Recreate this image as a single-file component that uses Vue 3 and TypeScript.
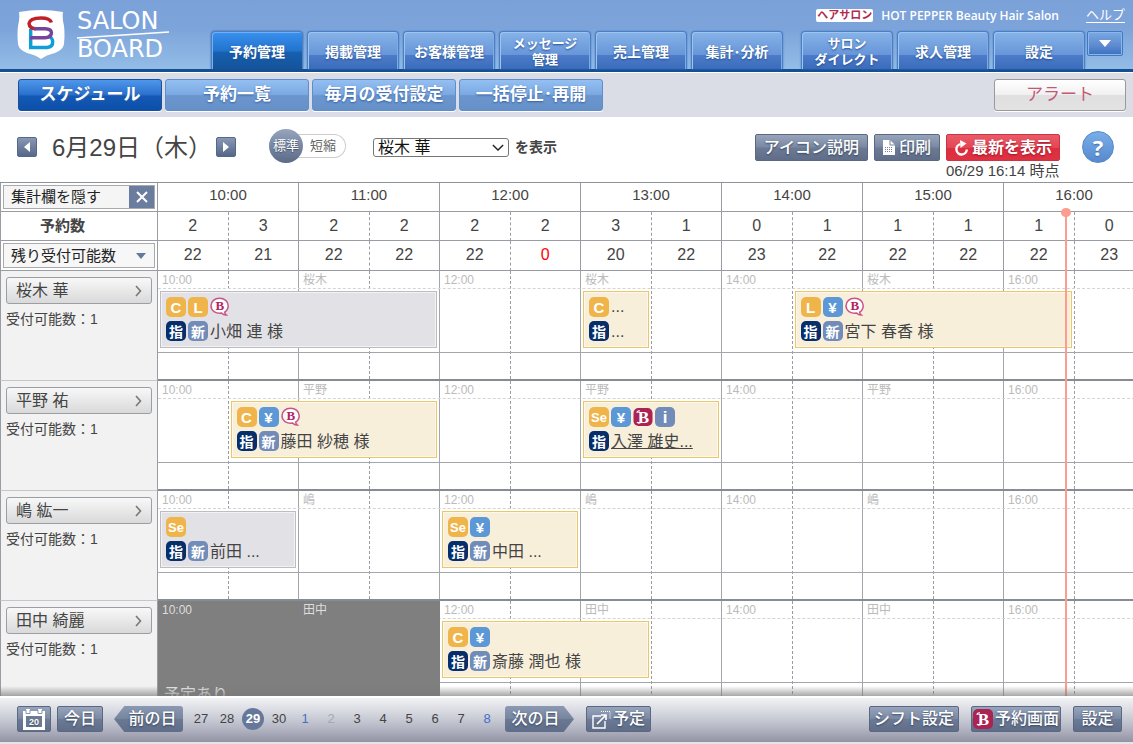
<script setup lang="ts">
import { computed, ref } from 'vue'

type IconKind = 'C' | 'L' | 'Se' | 'yen' | 'bubble' | 'beauty' | 'info' | 'shimei' | 'shin'

interface Booking {
  start: number
  span: number
  top: IconKind[]
  bottom: IconKind[]
  name: string
  note?: string
  done?: boolean
  linked?: boolean
}

interface Staff {
  name: string
  short: string
  capacity: number
  bookings: Booking[]
  blocked?: { start: number; span: number; text: string }
}

const mainTabs = ['予約管理', '掲載管理', 'お客様管理', 'メッセージ\n管理', '売上管理', '集計･分析']
const sideTabs = ['サロン\nダイレクト', '求人管理', '設定']
const subTabs = ['スケジュール', '予約一覧', '毎月の受付設定', '一括停止･再開']

const hours = ['10:00', '11:00', '12:00', '13:00', '14:00', '15:00', '16:00']
const reserved = [2, 3, 2, 2, 2, 2, 3, 1, 0, 1, 1, 1, 1, 0]
const remaining = [22, 21, 22, 22, 22, 0, 20, 22, 23, 22, 22, 22, 22, 23]

const staff: Staff[] = [
  {
    name: '桜木 華',
    short: '桜木',
    capacity: 1,
    bookings: [
      { start: 1, span: 4, top: ['C', 'L', 'bubble'], bottom: ['shimei', 'shin'], name: '小畑 連 様', done: true },
      { start: 7, span: 1, top: ['C'], bottom: ['shimei'], name: '...', note: '...' },
      { start: 10, span: 4, top: ['L', 'yen', 'bubble'], bottom: ['shimei', 'shin'], name: '宮下 春香 様' },
    ],
  },
  {
    name: '平野 祐',
    short: '平野',
    capacity: 1,
    bookings: [
      { start: 2, span: 3, top: ['C', 'yen', 'bubble'], bottom: ['shimei', 'shin'], name: '藤田 紗穂 様' },
      { start: 7, span: 2, top: ['Se', 'yen', 'beauty', 'info'], bottom: ['shimei'], name: '入澤 雄史...', linked: true },
    ],
  },
  {
    name: '嶋 紘一',
    short: '嶋',
    capacity: 1,
    bookings: [
      { start: 1, span: 2, top: ['Se'], bottom: ['shimei', 'shin'], name: '前田 ...', done: true },
      { start: 5, span: 2, top: ['Se', 'yen'], bottom: ['shimei', 'shin'], name: '中田 ...' },
    ],
  },
  {
    name: '田中 綺麗',
    short: '田中',
    capacity: 1,
    bookings: [{ start: 5, span: 3, top: ['C', 'yen'], bottom: ['shimei', 'shin'], name: '斎藤 潤也 様' }],
    blocked: { start: 1, span: 4, text: '予定あり' },
  },
]

const iconText: Record<IconKind, string> = {
  C: 'C',
  L: 'L',
  Se: 'Se',
  yen: '¥',
  bubble: 'B',
  beauty: 'B',
  info: 'i',
  shimei: '指',
  shin: '新',
}

const days = [27, 28, 29, 30, 1, 2, 3, 4, 5, 6, 7, 8]
const dayClass = (d: number) => ({ today: d === 29, weekend: d === 1 || d === 8, closed: d === 2 })

const selectedStaff = ref('桜木 華')
const nowOffset = ref(6.44)
const nowStyle = computed(() => ({ left: `${(nowOffset.value / hours.length) * 100}%` }))
const laneLabel = (s: Staff, i: number) => (i % 2 === 0 ? hours[i] : s.short)
const place = (b: { start: number; span: number }) => ({ gridColumn: `${b.start} / span ${b.span}` })
</script>

<template>
  <div class="app">
    <header class="header">
      <a class="logo" href="#" aria-label="SALON BOARD">
        <svg class="shield" viewBox="0 0 48 52" aria-hidden="true">
          <path d="M2 3 Q24 -1 46 3 Q45 9 47 17 Q48 25 47 35 Q46 41 38 44 Q29 46 24 50 Q19 46 10 44 Q2 41 1 35 Q0 25 1 17 Q3 9 2 3Z" fill="#fff" />
          <g fill="none" stroke-width="3.4">
            <path d="M13.7 20 V38.5 H30 Q36 38 35.7 32.500 Q35.500 28.500 31 27" stroke="#0f9fd8" />
            <path d="M34.500 13.500 Q33 9 24 9 Q13 9 12 14.500 Q12.500 19.500 19 19.800" stroke="#c1202b" />
            <path d="M17 19.800 H28 Q34.500 20 34.500 24 Q34 28.500 28 28.700 H13" stroke="#74459a" />
          </g>
        </svg>
        <span class="wordmark">
          <span>SALON</span>
          <svg viewBox="0 0 92 8" preserveAspectRatio="none" aria-hidden="true"><path d="M0 7 L92 1" stroke="#fff" stroke-width="1.6" /></svg>
          <span>BOARD</span>
        </span>
      </a>
      <div class="header-main">
        <div class="account">
          <span class="genre">ヘアサロン</span>
          <span class="salon">HOT PEPPER Beauty Hair Salon</span>
          <a class="help-link" href="#">ヘルプ</a>
        </div>
        <nav class="tabs" aria-label="メイン">
          <a v-for="(t, i) in mainTabs" :key="t" href="#" class="tab" :class="{ active: i === 0, two: t.includes('\n') }">{{ t }}</a>
          <span class="tab-space"></span>
          <a v-for="t in sideTabs" :key="t" href="#" class="tab" :class="{ two: t.includes('\n') }">{{ t }}</a>
          <button class="more" type="button" aria-label="メニューを開く"><i class="tri down"></i></button>
        </nav>
      </div>
    </header>

    <nav class="subnav" aria-label="予約管理">
      <a v-for="(t, i) in subTabs" :key="t" href="#" class="sub" :class="{ active: i === 0 }">{{ t }}</a>
      <a href="#" class="sub alert">アラート</a>
    </nav>

    <section class="toolbar">
      <button class="step" type="button" aria-label="前の日"><i class="tri left"></i></button>
      <h1 class="date">6月29日（木）</h1>
      <button class="step" type="button" aria-label="次の日"><i class="tri right"></i></button>
      <div class="density">
        <button class="wide" type="button" aria-pressed="true">標準</button>
        <button class="narrow" type="button" aria-pressed="false">短縮</button>
      </div>
      <label class="picker">
        <span class="select-wrap">
          <select v-model="selectedStaff">
            <option v-for="s in staff" :key="s.name">{{ s.name }}</option>
          </select>
          <svg viewBox="0 0 14 8" aria-hidden="true"><path d="M1 1 L7 7 L13 1" fill="none" stroke="#222" stroke-width="1.6" /></svg>
        </span>
        を表示
      </label>
      <div class="actions">
        <button class="metal" type="button">アイコン説明</button>
        <button class="metal" type="button">
          <svg class="doc" viewBox="0 0 12 15" aria-hidden="true">
            <path d="M0 0 H7 L12 5 V15 H0Z" fill="#fff" />
            <path d="M7 0 V5 H12" fill="none" stroke="#7484a0" />
            <path d="M2 7.5 H10 M2 9.5 H10 M2 11.5 H10" stroke="#7484a0" stroke-dasharray="1 1" />
          </svg>印刷
        </button>
        <div class="refresh">
          <button class="metal red" type="button">
            <svg class="reload" viewBox="0 0 15 16" aria-hidden="true">
              <path d="M6.500 4.200 A5.2 5.2 0 1 0 12.8 9.500" fill="none" stroke="#fff" stroke-width="2.4" />
              <path d="M6 0 L12.500 3.500 L6.500 8Z" fill="#fff" />
            </svg>最新を表示
          </button>
          <span class="stamp">06/29 16:14 時点</span>
        </div>
        <button class="question" type="button" aria-label="ヘルプ">?</button>
      </div>
    </section>

    <main class="board">
      <table class="schedule">
        <thead>
          <tr class="hours">
            <th scope="row" class="side">
              <button class="toggle" type="button"><span>集計欄を隠す</span><i>
                <svg viewBox="0 0 12 12" aria-hidden="true"><path d="M1 1 L11 11 M11 1 L1 11" stroke="#fff" stroke-width="2" /></svg>
              </i></button>
            </th>
            <th v-for="h in hours" :key="h" scope="col" class="hour">{{ h }}</th>
          </tr>
        </thead>
        <tbody>
          <tr class="counts">
            <th scope="row" class="side total">予約数</th>
            <td v-for="(n, i) in reserved" :key="i">{{ n }}</td>
          </tr>
          <tr class="counts remain">
            <th scope="row" class="side">
              <span class="kind">
                <select aria-label="集計の種類"><option>残り受付可能数</option></select>
                <i class="tri down blue"></i>
              </span>
            </th>
            <td v-for="(n, i) in remaining" :key="i" :class="{ none: n === 0 }">{{ n }}</td>
          </tr>
          <tr v-for="s in staff" :key="s.name" class="staff">
            <th scope="row" class="side person">
              <button type="button">
                {{ s.name }}
                <svg viewBox="0 0 7 12" aria-hidden="true"><path d="M1 1 L5.5 6 L1 11" fill="none" stroke="#777" stroke-width="1.6" /></svg>
              </button>
              <span>受付可能数：{{ s.capacity }}</span>
            </th>
            <td class="lane">
              <span v-for="n in 14" :key="'c' + n" class="col" :class="{ half: n % 2 === 1 }" :style="place({ start: n, span: 1 })"></span>
              <span class="line label-line"></span>
              <span class="line slot-line"></span>
              <div v-if="s.blocked" class="blocked" :style="place(s.blocked)">{{ s.blocked.text }}</div>
              <span
                v-for="(h, i) in hours"
                :key="h"
                class="label"
                :class="{ onblock: s.blocked && i * 2 < s.blocked.span }"
                :style="place({ start: i * 2 + 1, span: 2 })"
              >{{ laneLabel(s, i) }}</span>
              <article v-for="b in s.bookings" :key="b.start" class="booking" :class="{ done: b.done }" :style="place(b)">
                <div class="line-items">
                  <template v-for="k in b.top" :key="k">
                    <svg v-if="k === 'bubble'" class="ic" viewBox="0 0 20 20" role="img" aria-label="B">
                      <path d="M9.5 1.2 C14.5 1.2 18.2 4.4 18.2 8.7 C18.2 11.6 16.8 13.8 14.6 15.1 Q15 17 16.4 18 Q13.4 18.2 11.6 16.1 C5.6 16.9 1 13.6 1 8.8 C1 4.4 4.7 1.2 9.5 1.2Z" fill="#fff" stroke="#c8558a" stroke-width="1.5" />
                      <text x="9.8" y="13.2" text-anchor="middle" class="bubble-b">B</text>
                    </svg>
                    <svg v-else-if="k === 'beauty'" class="ic" viewBox="0 0 20 20" role="img" aria-label="B">
                      <rect x="0.5" y="1" width="19" height="18" rx="5" fill="#ab2352" />
                      <text x="10.5" y="15.6" text-anchor="middle" class="beauty-b">B</text>
                      <path d="M4 6 Q4 3.5 7 4 M4 15 Q5 17 8 15.5" fill="none" stroke="#fff" stroke-width="1.2" />
                    </svg>
                    <span v-else class="ic" :class="k">{{ iconText[k] }}</span>
                  </template>
                  <span v-if="b.note" class="note">{{ b.note }}</span>
                </div>
                <div class="line-items">
                  <span v-for="k in b.bottom" :key="k" class="ic" :class="k">{{ iconText[k] }}</span>
                  <a v-if="b.linked" class="name" href="#">{{ b.name }}</a>
                  <span v-else class="name">{{ b.name }}</span>
                </div>
              </article>
            </td>
          </tr>
        </tbody>
      </table>
      <div class="now-layer"><i class="now" :style="nowStyle"></i></div>
      <div class="fade"></div>
    </main>

    <footer class="footer">
      <button class="metal foot calendar" type="button" aria-label="カレンダー">
        <svg viewBox="0 0 22 21" aria-hidden="true">
          <path d="M0 2 H3 V0 H7 V2 H15 V0 H19 V2 H22 V21 H0Z" fill="#fff" />
          <path d="M3 1 V4.500 H7 V1 M15 1 V4.500 H19 V1" fill="none" stroke="#8a97ae" />
          <rect x="3" y="7" width="16" height="11" fill="#6c7b94" />
          <text x="11" y="16" text-anchor="middle" class="cal-n">20</text>
        </svg>
      </button>
      <button class="metal foot today-btn" type="button">今日</button>
      <button class="arrow prev" type="button">前の日</button>
      <nav class="days" aria-label="日付">
        <a v-for="d in days" :key="d" href="#" :class="dayClass(d)">{{ d }}</a>
      </nav>
      <button class="arrow next" type="button">次の日</button>
      <button class="metal foot plan" type="button">
        <svg viewBox="0 0 19 19" aria-hidden="true">
          <path d="M9 6 H1 V18 H13 V11" fill="none" stroke="#fff" stroke-width="1.4" />
          <path d="M5 14 L14 5 M9 5 H14 V10" fill="none" stroke="#fff" stroke-width="1.6" />
          <path d="M9 1.5 H18 V9" fill="none" stroke="#fff" stroke-dasharray="1 1" />
        </svg>予定
      </button>
      <div class="foot-right">
        <button class="metal foot" type="button">シフト設定</button>
        <button class="metal foot" type="button">
          <svg class="b-mark" viewBox="0 0 20 20" aria-hidden="true">
            <rect width="20" height="20" rx="5" fill="#ab2352" />
            <text x="10.5" y="15.6" text-anchor="middle" class="beauty-b">B</text>
            <path d="M4 6 Q4 3.5 7 4 M4 15 Q5 17 8 15.5" fill="none" stroke="#fff" stroke-width="1.2" />
          </svg>予約画面
        </button>
        <button class="metal foot small" type="button">設定</button>
      </div>
    </footer>
  </div>
</template>

<style>
body {
  background: #fff;
  overflow: hidden;
}
</style>

<style scoped>
.app {
  height: 100vh;
  display: flex;
  flex-direction: column;
  font-family: 'Liberation Sans', 'Noto Sans CJK JP', sans-serif;
  font-size: 16px;
  line-height: 20px;
  color: #444;
  overflow: hidden;
}
.app * {
  box-sizing: border-box;
}
button,
select {
  font: inherit;
  color: inherit;
  margin: 0;
  padding: 0;
  cursor: pointer;
}
a {
  color: inherit;
  text-decoration: none;
}
svg {
  display: block;
  flex: none;
}
.tri {
  display: block;
  width: 0;
  height: 0;
  border: 5px solid transparent;
}
.tri.down {
  border-width: 7px 6px 0;
  border-top-color: #fff;
}
.tri.left {
  border-width: 5px 6px 5px 0;
  border-right-color: #fff;
}
.tri.right {
  border-width: 5px 0 5px 6px;
  border-left-color: #fff;
}
.tri.blue {
  border-top-color: #64799f;
}

/* header */
.header {
  flex: none;
  display: flex;
  background: linear-gradient(#7ba1d9 0, #7da4da 40%, #93bce6 100%);
  border-bottom: 3px solid #154f93;
}
.logo {
  flex: none;
  width: 211px;
  padding: 9px 0 0 17px;
  display: flex;
  gap: 12px;
  color: #fff;
}
.shield {
  width: 48px;
  height: 52px;
}
.wordmark {
  display: flex;
  flex-direction: column;
  font: 24px/20px 'DejaVu Sans', sans-serif;
  padding-top: 2px;
}
.wordmark svg {
  width: 92px;
  height: 8px;
}
.header-main {
  flex: 1;
  min-width: 0;
}
.account {
  display: flex;
  justify-content: flex-end;
  align-items: center;
  height: 31px;
  padding-right: 8px;
  color: #fff;
}
.genre {
  background: #fff;
  color: #b02a52;
  border-radius: 2px;
  font-size: 11px;
  line-height: 13px;
  font-weight: bold;
  padding: 0 1px;
  margin-right: 8px;
}
.salon {
  font: 600 12px/16px 'Open Sans', sans-serif;
  margin-right: 27px;
}
.help-link {
  font-size: 13px;
  line-height: 14px;
  border-bottom: 1px solid #fff;
}
.tabs {
  display: flex;
  gap: 4px;
  height: 38px;
}
.tab {
  width: 92px;
  display: flex;
  align-items: center;
  justify-content: center;
  text-align: center;
  white-space: pre-line;
  padding-top: 2px;
  color: #fff;
  font-weight: bold;
  font-size: 14px;
  line-height: 16px;
  text-shadow: 0 1px 2px #234f92;
  border: 1px solid #4a7fc5;
  border-bottom: 0;
  border-radius: 4px 4px 0 0;
  background: linear-gradient(#86b3e8 0, #6795d8 62%, #4c7cc8 63%, #3b6cbc 100%);
  box-shadow: inset 1px 1px #9cc4f0, inset -1px 0 #80ace4, 0 0 2px #4778bd;
}
.tab.two {
  font-size: 13px;
}
.tab.active {
  background: linear-gradient(#3990f0 0, #2275cc 50%, #175fae 56%, #14549b 100%);
  box-shadow: inset 1px 1px #70b1f5, 0 0 2px #27528c;
}
.tab-space {
  width: 10px;
}
.more {
  width: 36px;
  height: 25px;
  margin-left: -2px;
  display: grid;
  place-items: center;
  border: 1px solid #3f79c4;
  border-radius: 2px;
  background: linear-gradient(#7aa9e2, #5d8ad0 60%, #3b6fbd);
  box-shadow: inset 0 0 0 1px #8bb6ea;
}

/* sub navigation */
.subnav {
  flex: none;
  display: flex;
  gap: 3px;
  padding: 6px 7px 6px 18px;
  border-top: 1px solid #fff;
  background: #dadde6;
}
.sub {
  width: 144px;
  height: 32px;
  display: flex;
  align-items: center;
  justify-content: center;
  color: #fff;
  font-size: 17px;
  font-weight: bold;
  text-shadow: 0 1px 2px #3461a4;
  border: 1px solid #5e8ecb;
  border-radius: 3px;
  background: linear-gradient(#93bff2 0, #7ca9e2 48%, #6b95ce 52%, #6691c8 100%);
  box-shadow: 0 1px #fff;
}
.sub.active {
  border-color: #195099;
  background: linear-gradient(#4e97eb 0, #2c71cd 48%, #1459b5 54%, #0b4fa9 100%);
}
.sub.alert {
  width: 132px;
  margin-left: auto;
  color: #c25a76;
  font-weight: normal;
  text-shadow: none;
  border-color: #999;
  background: linear-gradient(#fff 0, #f1f1f1 48%, #dfdfdf 52%, #e3e3e3 100%);
}

/* toolbar */
.toolbar {
  flex: none;
  display: flex;
  align-items: flex-start;
  height: 65px;
  padding: 17px 19px 0 17px;
}
.step {
  width: 20px;
  height: 20px;
  margin-top: 3px;
  display: grid;
  place-items: center;
  border: 1px solid #56688a;
  border-radius: 2px;
  background: linear-gradient(#8897b3, #556789);
}
.date {
  margin: 0 4px 0 15px;
  font-size: 24px;
  line-height: 28px;
  font-weight: normal;
}
.density {
  display: flex;
  align-items: center;
  height: 24px;
  margin: 0 27px 0 33px;
  border: 1px solid #ccc;
  border-left: 0;
  border-radius: 12px;
}
.density button {
  border: 0;
  background: none;
  font-size: 13px;
  line-height: 20px;
}
.density .wide {
  width: 34px;
  height: 34px;
  border-radius: 50%;
  color: #fff;
  text-shadow: 0 1px 1px #44516a;
  background: linear-gradient(#96a4bd, #5a6a88);
}
.density .narrow {
  width: 42px;
  padding-right: 2px;
  color: #666;
}
.picker {
  display: flex;
  align-items: center;
  gap: 6px;
  height: 26px;
  font-size: 14px;
  font-weight: bold;
}
.select-wrap {
  display: grid;
  align-items: center;
}
.select-wrap select {
  grid-area: 1 / 1;
  width: 136px;
  height: 19px;
  padding: 0 4px;
  appearance: none;
  border: 1px solid #777;
  border-radius: 3px;
  background: #fff;
  color: #111;
  font-size: 16px;
  line-height: 17px;
  font-weight: normal;
}
.select-wrap svg {
  grid-area: 1 / 1;
  justify-self: end;
  width: 12px;
  height: 7px;
  margin-right: 5px;
  pointer-events: none;
}
.actions {
  display: flex;
  align-items: flex-start;
  gap: 6px;
  margin-left: auto;
}
.metal {
  height: 27px;
  padding: 0 8px;
  display: flex;
  align-items: center;
  justify-content: center;
  gap: 2px;
  white-space: nowrap;
  color: #fff;
  text-shadow: 0 1px 2px #37445c;
  border: 1px solid #5a6882;
  border-radius: 2px;
  font-weight: 500;
  background: linear-gradient(#97a4bb 0, #7a89a3 48%, #6c7a95 52%, #5f6d88 100%);
}
.actions .red {
  padding: 0 7px;
  gap: 3px;
  border-color: #c93444;
  font-weight: bold;
  text-shadow: 0 1px 2px #9b1424;
  background: linear-gradient(#ea5b68 0, #e44655 50%, #dd2d3f 54%, #de3243 100%);
}
.doc {
  width: 12px;
  height: 15px;
  margin-right: 2px;
}
.reload {
  width: 15px;
  height: 16px;
}
.refresh {
  display: flex;
  flex-direction: column;
}
.stamp {
  font-size: 15px;
  white-space: nowrap;
}
.question {
  width: 32px;
  height: 32px;
  margin: -3px 0 0 16px;
  border: 1px solid #5388cb;
  border-radius: 50%;
  color: #fff;
  font: bold 22px/28px 'Open Sans', sans-serif;
  text-shadow: 0 1px 1px #3b6cb0;
  background: linear-gradient(#79ade8, #578ace);
}

/* schedule */
.board {
  flex: 1;
  min-height: 0;
  position: relative;
  overflow: hidden;
}
.schedule,
.schedule thead,
.schedule tbody {
  display: block;
  min-width: 100%;
}
.schedule {
  width: max-content;
  border-top: 1px solid #8e9299;
}
.schedule tr {
  display: grid;
  grid-template-columns: 158px repeat(14, minmax(70.5px, 1fr));
}
th,
td {
  padding: 0;
  font-weight: normal;
}
.side {
  display: flex;
  align-items: center;
  border: solid #999ca2;
  border-width: 0 1px 1px;
  padding: 0 2px;
}
.hours {
  height: 29px;
}
.hour {
  grid-column: span 2;
  font-size: 15px;
  line-height: 24px;
  border: solid #999ca2;
  border-width: 0 1px 1px 0;
}
.counts {
  height: 29px;
}
.counts.remain {
  height: 30px;
}
.counts td {
  text-align: center;
  line-height: 28px;
  border-right: 1px solid #999ca2;
  border-bottom: 1px solid #999ca2;
}
.counts td:nth-child(even) {
  border-right: 1px dashed #999ca2;
}
.counts td.none {
  color: #f00;
}
.total {
  padding-left: 39px;
  font-size: 15px;
  font-weight: bold;
}
.toggle {
  flex: 1;
  height: 24px;
  display: flex;
  align-items: stretch;
  border: 1px solid #aaa;
  background: #f5f5f5;
  color: #222;
  font-size: 15px;
  line-height: 22px;
}
.toggle span {
  flex: 1;
  text-align: left;
  padding-left: 7px;
}
.toggle i {
  width: 25px;
  display: grid;
  place-items: center;
  background: #6b7d9e;
}
.toggle svg {
  width: 12px;
  height: 12px;
}
.kind {
  flex: 1;
  display: grid;
  align-items: center;
}
.kind select {
  grid-area: 1 / 1;
  height: 25px;
  padding: 0 7px;
  appearance: none;
  border: 1px solid #aaa;
  border-radius: 0;
  background: #f7f7f7;
  color: #222;
  font-size: 15px;
  line-height: 22px;
}
.kind .tri {
  grid-area: 1 / 1;
  justify-self: end;
  margin-right: 9px;
  border-width: 6px 5px 0;
  pointer-events: none;
}
.staff {
  height: 110px;
}
.person {
  flex-direction: column;
  align-items: flex-start;
  gap: 5px;
  padding: 6px 5px 0;
  background: #f2f2f2;
  border-bottom-color: #c4c6ca;
}
.person button {
  width: 100%;
  height: 27px;
  padding: 0 9px;
  display: flex;
  align-items: center;
  justify-content: space-between;
  border: 1px solid #9a9fa6;
  border-radius: 3px;
  background: linear-gradient(#f8f8f8, #d9d9d9);
}
.person svg {
  width: 7px;
  height: 12px;
}
.person span {
  font-size: 14px;
}
.lane {
  grid-column: 2 / -1;
  display: grid;
  grid-template-columns: repeat(14, minmax(0, 1fr));
  grid-template-rows: 18px 64px 26px;
  border-bottom: 2px solid #868b94;
}
.col {
  grid-row: 1 / -1;
  border-right: 1px solid #a3a6ab;
}
.col.half {
  border-right: 1px dashed #999ca2;
}
.line {
  grid-column: 1 / -1;
}
.label-line {
  grid-row: 1;
  border-bottom: 1px dashed #d4d4d4;
}
.slot-line {
  grid-row: 2;
  border-bottom: 1px solid #a3a6ab;
}
.label {
  grid-row: 1;
  padding-left: 4px;
  font-size: 12px;
  line-height: 18px;
  color: #bbb;
}
.label.onblock {
  color: #ddd;
}
.blocked {
  grid-row: 1 / -1;
  padding: 84px 6px 0;
  background: #7f7f7f;
  color: #e8e8e8;
  line-height: 20px;
}
.booking {
  grid-row: 2;
  margin: 2px 3px 5px 2px;
  padding: 5px;
  display: flex;
  flex-direction: column;
  gap: 4px;
  min-width: 0;
  border: 1px solid #e8c76f;
  box-shadow: inset 0 0 0 1px #fdf8e9;
  background: #f8efdb;
}
.booking.done {
  border-color: #bcbcc2;
  box-shadow: inset 0 0 0 1px #f2f2f5;
  background: #e1e1e6;
}
.line-items {
  display: flex;
  align-items: center;
  gap: 2px;
  height: 20px;
  white-space: nowrap;
}
.ic {
  flex: none;
  width: 20px;
  height: 20px;
  border-radius: 5px;
  text-align: center;
  color: #fff;
  font: bold 15px/21px 'Liberation Sans', sans-serif;
}
.C,
.L,
.Se {
  background: #f0b54a;
}
.Se {
  font-size: 13px;
}
.yen {
  background: #5c98d6;
}
.info {
  background: #728cba;
  font-size: 17px;
}
.shimei,
.shin {
  font: bold 14px/20px 'Noto Sans CJK JP', sans-serif;
}
.shimei {
  background: #062e6b;
}
.shin {
  background: #728cba;
}
.bubble-b {
  font: bold 13px 'Liberation Serif', serif;
  fill: #b3245c;
}
.beauty-b {
  font: bold 17px 'Liberation Serif', serif;
  fill: #fff;
  text-shadow: none;
}
.name {
  line-height: 24px;
  padding-top: 2px;
}
a.name {
  text-decoration: underline;
}
.now-layer {
  position: absolute;
  inset: 30px 0 0 158px;
  min-width: 987px;
  pointer-events: none;
}
.now {
  position: absolute;
  top: 0;
  bottom: 0;
  width: 2px;
  margin-left: -1px;
  background: #fb9d90;
}
.now::before {
  content: '';
  position: absolute;
  top: -4px;
  left: -4px;
  width: 10px;
  height: 9px;
  border-radius: 50%;
  background: #fb9d90;
}
.fade {
  position: absolute;
  inset: auto 0 0;
  height: 10px;
  background: linear-gradient(rgba(120, 120, 120, 0), rgba(120, 120, 120, 0.65));
}

/* footer */
.footer {
  flex: none;
  display: flex;
  align-items: center;
  height: 48px;
  padding: 0 11px 2px 17px;
  border-top: 2px solid #fff;
  border-bottom: 2px solid #e4e5ea;
  background: linear-gradient(#f1f2f4 0, #d4d6de 35%, #b3b5c3 70%, #9294a3 100%);
}
.foot {
  height: 26px;
}
.calendar {
  width: 34px;
  padding: 0;
}
.calendar svg {
  width: 22px;
  height: 21px;
}
.cal-n {
  font: bold 9px 'Liberation Sans', sans-serif;
  fill: #fff;
}
.today-btn {
  width: 46px;
  padding: 0;
  margin: 0 11px 0 6px;
}
.arrow {
  width: 69px;
  height: 26px;
  border: 0;
  color: #fff;
  font-weight: 500;
  text-shadow: 0 1px 2px #37445c;
  background: linear-gradient(#8b98b1 0, #77869f 48%, #6a7893 52%, #5f6d88 100%);
}
.prev {
  padding-left: 8px;
  border-radius: 0 3px 3px 0;
  clip-path: polygon(0 50%, 15% 0, 100% 0, 100% 100%, 15% 100%);
}
.next {
  padding-right: 8px;
  border-radius: 3px 0 0 3px;
  clip-path: polygon(0 0, 85% 0, 100% 50%, 85% 100%, 0 100%);
}
.days {
  display: flex;
  margin: 0 5px;
}
.days a {
  width: 26px;
  height: 22px;
  display: grid;
  place-items: center;
  font-size: 13px;
}
.days .today {
  width: 22px;
  margin: 0 2px;
  border-radius: 50%;
  color: #fff;
  font-weight: bold;
  background: #66789a;
}
.days .weekend {
  color: #4470c4;
}
.days .closed {
  color: #a6a8b0;
}
.plan {
  margin-left: 12px;
  padding: 0 5px;
}
.plan svg {
  width: 19px;
  height: 19px;
}
.foot-right {
  display: flex;
  gap: 12px;
  margin-left: auto;
}
.foot-right .metal {
  width: 90px;
  padding: 0;
}
.foot-right .small {
  width: 49px;
}
.b-mark {
  width: 20px;
  height: 20px;
}
</style>
